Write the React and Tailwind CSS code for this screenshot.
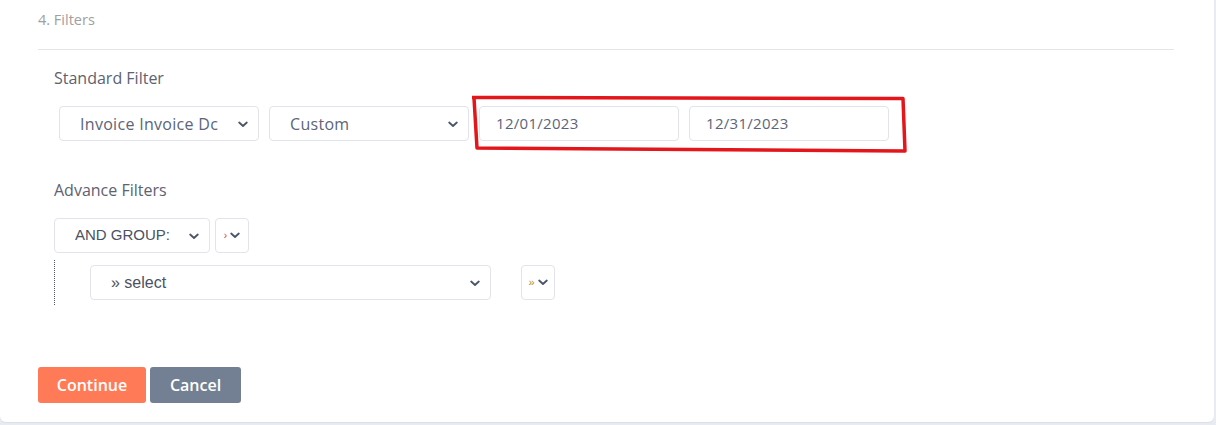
import React from "react";

const Chevron = ({ className = "" }) => (
  <svg width="10" height="7" viewBox="0 0 10 7" className={className}>
    <path d="M1.2 1.5 L5 5 L8.8 1.5" fill="none" stroke="#4a5568" strokeWidth="1.8" strokeLinecap="round" strokeLinejoin="round" />
  </svg>
);

const Select = ({ text, w, font = "font-['Open_Sans',sans-serif] text-[16px] tracking-[0.3px] text-[#5b6577]" }) => (
  <div className={`h-[35px] ${w} border border-[#e1e4ec] rounded-[4px] bg-white flex items-center pl-[20px] pr-[10px]`}>
    <span className={`flex-1 overflow-hidden whitespace-nowrap ${font}`}>{text}</span>
    <Chevron className="shrink-0 ml-2 mt-[1px]" />
  </div>
);

export default function App() {
  return (
    <div className="w-[1216px] h-[425px] bg-[#e8ebf1] font-['Open_Sans',sans-serif]">
      <div className="w-[1214px] h-[422px] bg-white rounded-b-[6px] shadow-[0_1px_1px_rgba(0,0,0,0.05)] pt-[10px] pl-[38px] pr-[40px] relative">
        <div className="text-[14.5px] text-[#a0a0a0] leading-[20px]">4. Filters</div>
        <div className="mt-[19px] border-t border-[#e6e6e6]" />
        <div className="pl-[16px]">
          <div className="mt-[17px] text-[16px] text-[#5d6270] leading-[22px]">Standard Filter</div>
          <div className="mt-[17px] flex gap-[10px] pl-[5px]">
            <Select text="Invoice Invoice Dc" w="w-[200px]" />
            <Select text="Custom" w="w-[200px]" />
            <div className="h-[35px] w-[200px] border border-[#e1e4ec] rounded-[4px] flex items-center pl-[16px] text-[15px] tracking-[0.3px] text-[#5b6577]">12/01/2023</div>
            <div className="h-[35px] w-[200px] border border-[#e1e4ec] rounded-[4px] flex items-center pl-[16px] text-[15px] tracking-[0.3px] text-[#5b6577]">12/31/2023</div>
          </div>
          <div className="mt-[38px] text-[16px] text-[#5d6270] leading-[22px]">Advance Filters</div>
          <div className="mt-[17px] flex gap-[5px]">
            <Select text="AND GROUP:" w="w-[156px]" font="font-['Liberation_Sans',sans-serif] text-[15px] text-[#4a5263]" />
            <div className="h-[35px] w-[34px] border border-[#e1e4ec] rounded-[4px] flex items-center justify-center gap-[3px]">
              <span className="text-[10px] text-[#c04040] font-['Liberation_Sans',sans-serif]">›</span>
              <Chevron />
            </div>
          </div>
          <div className="mt-[7px] flex border-l border-dotted border-[#4a5568] h-[45px]">
            <div className="ml-[35px] mt-[5px] flex gap-[30px]">
              <Select text="» select" w="w-[401px]" font="font-['Liberation_Sans',sans-serif] text-[16px] text-[#4a5263]" />
              <div className="h-[35px] w-[34px] border border-[#e1e4ec] rounded-[4px] flex items-center justify-center gap-[3px]">
                <span className="text-[11px] text-[#c08a20] font-['Liberation_Sans',sans-serif]">»</span>
                <Chevron />
              </div>
            </div>
          </div>
        </div>
        <div className="mt-[62px] flex gap-[4px]">
          <button className="h-[36px] w-[108px] rounded-[3px] bg-[#ff7b57] text-white text-[16px] font-semibold">Continue</button>
          <button className="h-[36px] w-[91px] rounded-[3px] bg-[#738093] text-white text-[16px] font-semibold">Cancel</button>
        </div>
        <svg className="absolute left-[468px] top-[94px]" width="442" height="62" viewBox="0 0 442 62">
          <path d="M4 3.5 L435 4.5 L437 57 L9 54 L6 4" fill="none" stroke="#e3161b" strokeWidth="3.5" strokeLinejoin="round" />
        </svg>
      </div>
    </div>
  );
}
